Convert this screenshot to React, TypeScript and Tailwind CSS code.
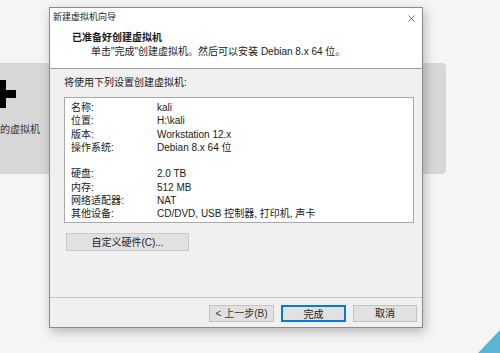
import { X } from 'lucide-react';

const rows: [string, string][] = [
  ['名称:', 'kali'],
  ['位置:', 'H:\\kali'],
  ['版本:', 'Workstation 12.x'],
  ['操作系统:', 'Debian 8.x 64 位'],
  ['', ''],
  ['硬盘:', '2.0 TB'],
  ['内存:', '512 MB'],
  ['网络适配器:', 'NAT'],
  ['其他设备:', 'CD/DVD, USB 控制器, 打印机, 声卡'],
];

const font = "font-['Liberation_Sans','Noto_Sans_CJK_SC',sans-serif]";

export default function App() {
  return (
    <div className={`relative h-[353px] w-[500px] overflow-hidden bg-[#f5f5f5] text-[#1a1a1a] ${font}`}>
      {/* tile behind the dialog */}
      <div className="absolute left-[-10px] top-[63px] h-[111px] w-[456px] rounded-[4px] bg-[#d7d7d7]">
        <div className="relative ml-[-2px] mt-[17px] h-[28px] w-[28px]">
          <div className="absolute left-0 top-[10px] h-[8px] w-[28px] bg-black" />
          <div className="absolute left-[10px] top-0 h-[28px] w-[8px] bg-black" />
        </div>
        <div className="ml-[10px] mt-[16px] text-[10px] leading-[12px] text-[#333]">的虚拟机</div>
      </div>
      <div className="absolute bottom-0 right-0 h-0 w-0 border-b-[23px] border-l-[22px] border-b-[#5bb4d6] border-l-transparent" />

      <div className="absolute left-[49px] top-[7px] flex h-[321px] w-[374px] flex-col border border-[#8a8a8a] bg-[#f0f0f0] shadow-[2px_4px_10px_rgba(0,0,0,0.25)]">
        <div className="bg-white">
          <div className="flex h-[20px] items-center justify-between pl-[3px] pr-[5px] text-[9px]">
            <span>新建虚拟机向导</span>
            <X size={11} strokeWidth={1.2} />
          </div>
          <div className="h-[41px] border-b border-[#a0a0a0] pl-[22px] pt-[3px]">
            <div className="text-[10px] font-bold leading-[14px]">已准备好创建虚拟机</div>
            <div className="pl-[19px] text-[10px] leading-[13px]">单击"完成"创建虚拟机。然后可以安装 Debian 8.x 64 位。</div>
          </div>
        </div>

        <div className="flex flex-1 flex-col px-[14px]">
          <div className="pt-[7px] text-[10px] leading-[13px]">将使用下列设置创建虚拟机:</div>
          <div className="mt-[8px] h-[126px] w-[350px] border border-[#a8a8a8] bg-white px-[6px] pt-[3px]">
            {rows.map(([k, v], i) => (
              <div key={i} className="flex h-[13.3px] text-[10px] leading-[13.3px]">
                <span className="w-[86px] shrink-0">{k}</span>
                <span className="whitespace-nowrap">{v}</span>
              </div>
            ))}
          </div>
          <button className="ml-[2px] mt-[10px] h-[18px] w-[123px] border border-[#c8c8c8] bg-[#e1e1e1] text-[10px]">
            自定义硬件(C)...
          </button>
        </div>

        <div className="flex h-[30px] items-start justify-end gap-[7px] border-t border-[#c8c8c8] pr-[5px] pt-[7px]">
          <button className="h-[17px] w-[65px] border border-[#c2c2c2] bg-[#e1e1e1] text-[10px] text-[#333]">&lt; 上一步(B)</button>
          <button className="h-[17px] w-[65px] border-2 border-[#0a78d7] bg-[#e1e1e1] text-[10px]">完成</button>
          <button className="h-[17px] w-[64px] border border-[#c2c2c2] bg-[#e1e1e1] text-[10px]">取消</button>
        </div>
      </div>
    </div>
  );
}
